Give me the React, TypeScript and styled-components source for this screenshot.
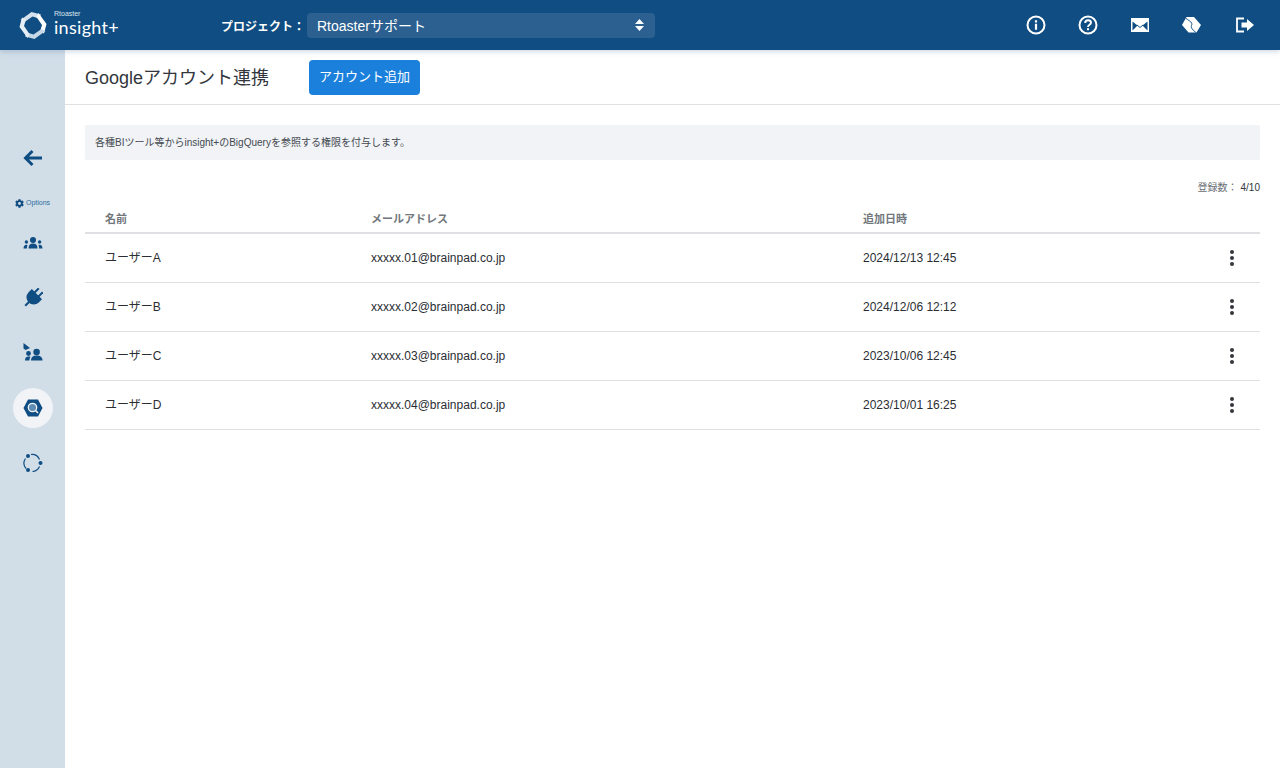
import styled, { createGlobalStyle } from 'styled-components'
import { FaCog } from 'react-icons/fa'

const Global = createGlobalStyle`
  html, body {
    margin: 0;
    padding: 0;
    height: 100%;
    background: #ffffff;
    font-family: "Liberation Sans", "Noto Sans CJK JP", sans-serif;
  }
  * {
    box-sizing: border-box;
  }
`

const Page = styled.div`
  width: 1280px;
  height: 768px;
  display: flex;
  flex-direction: column;
  overflow: hidden;
`

const Header = styled.header`
  height: 50px;
  flex: none;
  background: #0f4d82;
  box-shadow: 0 2px 5px rgba(40, 80, 130, 0.2);
  display: flex;
  align-items: center;
  padding-left: 19px;
  position: relative;
  z-index: 2;
`

const Logo = styled.div`
  width: 202px;
  display: flex;
  align-items: center;
  gap: 7px;
`

const LogoText = styled.div`
  display: flex;
  flex-direction: column;
  color: #ffffff;
  margin-top: -4px;
`

const LogoSmall = styled.span`
  font-size: 7px;
  line-height: 8px;
  color: #dbe6f0;
`

const LogoBig = styled.span`
  font-family: "Lato", sans-serif;
  font-size: 18px;
  line-height: 18px;
  letter-spacing: 0.3px;
`

const ProjectLabel = styled.span`
  width: 86px;
  color: #ffffff;
  font-size: 12px;
  font-weight: 700;
  white-space: nowrap;
`

const ProjectSelect = styled.div`
  width: 348px;
  height: 25px;
  padding: 0 11px 0 10px;
  border-radius: 4px;
  background: #2b6090;
  color: #ffffff;
  font-size: 14px;
  display: flex;
  align-items: center;
  justify-content: space-between;
`

const HeaderIcons = styled.div`
  margin-left: auto;
  display: flex;
  align-items: center;
  gap: 32px;
  padding-right: 26px;
`

const HeaderIcon = styled.svg`
  width: 20px;
  height: 20px;
  display: block;
  overflow: visible;
`

const Body = styled.div`
  flex: 1;
  display: flex;
  min-height: 0;
`

const Sidebar = styled.nav`
  width: 65px;
  flex: none;
  background: #d1dee8;
  padding-top: 88px;
  display: flex;
  flex-direction: column;
  align-items: center;
`

const NavItem = styled.div<{ $active?: boolean }>`
  width: 40px;
  height: 40px;
  margin-bottom: 15px;
  border-radius: 50%;
  background: ${({ $active }) => ($active ? '#f1f3f7' : 'transparent')};
  display: flex;
  align-items: center;
  justify-content: center;
`

const OptionsLabel = styled.div`
  height: 30px;
  padding-top: 5px;
  display: flex;
  align-items: flex-start;
  justify-content: center;
  gap: 2px;
  font-size: 7px;
  line-height: 10px;
  color: #2f6c9e;

  svg {
    color: #0f4d82;
    margin-top: 1px;
  }
`

const Main = styled.main`
  flex: 1;
  min-width: 0;
`

const TitleBar = styled.div`
  height: 55px;
  padding-left: 20px;
  border-bottom: 1px solid #dfdfe4;
  display: flex;
  align-items: center;
`

const Title = styled.h1`
  width: 224px;
  margin: -3px 0 0;
  font-size: 18px;
  font-weight: 400;
  color: #33373d;
  white-space: nowrap;
`

const AddButton = styled.button`
  width: 111px;
  height: 35px;
  border: none;
  border-radius: 4px;
  background: #1b80dc;
  color: #ffffff;
  font-family: inherit;
  font-size: 13px;
  padding: 0 0 3px;
`

const Content = styled.div`
  padding: 20px 20px 0;
`

const Notice = styled.div`
  height: 35px;
  padding: 0 0 2px 10px;
  border-radius: 2px;
  background: #f1f3f7;
  color: #444a50;
  font-size: 10px;
  display: flex;
  align-items: center;
`

const Count = styled.div`
  margin-top: 22px;
  height: 12px;
  text-align: right;
  font-size: 10px;
  line-height: 12px;
  color: #6b7075;

  b {
    font-weight: 400;
    color: #33373d;
    margin-left: 3px;
  }
`

const Row = styled.div`
  height: 49px;
  display: grid;
  grid-template-columns: 286px 492px 1fr 40px;
  align-items: center;
  border-bottom: 1px solid #dfdfe4;
  font-size: 12px;
  color: #2a2e33;
`

const HeadRow = styled(Row)`
  height: 28px;
  margin-top: 12px;
  padding-bottom: 3px;
  border-bottom: 2px solid #dfdfe4;
  font-size: 11px;
  font-weight: 700;
  color: #72777c;
`

const Cell = styled.div<{ $first?: boolean }>`
  padding-left: ${({ $first }) => ($first ? '20px' : '0')};
  white-space: nowrap;
`

const NameCell = styled(Cell)`
  margin-top: -4px;
`

const Dots = styled.div`
  justify-self: start;
  display: flex;
  flex-direction: column;
  gap: 2px;
  margin-left: 10px;

  span {
    width: 4px;
    height: 4px;
    border-radius: 50%;
    background: #33373d;
  }
`

const users = [
  { name: 'ユーザーA', mail: 'xxxxx.01@brainpad.co.jp', date: '2024/12/13 12:45' },
  { name: 'ユーザーB', mail: 'xxxxx.02@brainpad.co.jp', date: '2024/12/06 12:12' },
  { name: 'ユーザーC', mail: 'xxxxx.03@brainpad.co.jp', date: '2023/10/06 12:45' },
  { name: 'ユーザーD', mail: 'xxxxx.04@brainpad.co.jp', date: '2023/10/01 16:25' },
]

const navy = '#0f4d82'
const logoColors = ['#d5e2ee', '#ffffff', '#c6d7e6', '#e6eef5']

function LogoMark() {
  return (
    <svg width="28" height="29" viewBox="0 0 28 29">
      {logoColors.map((c, i) => (
        <path
          key={c}
          d="M1.500 9 12.500 1 22 3.500 20 7.500 13.500 5.500 5.500 11z"
          fill={c}
          transform={`rotate(${i * 90} 14 14.500)`}
        />
      ))}
    </svg>
  )
}

function People() {
  return (
    <svg width="20" height="12" viewBox="0 0 20 12" fill={navy}>
      <circle cx="10" cy="3" r="3" />
      <path d="M5.500 11.500c0-3.300 1.500-5 4.500-5s4.500 1.700 4.500 5z" />
      <circle cx="3.400" cy="5" r="1.700" />
      <path d="M.5 11.500c0-2.500 1-3.800 3-3.800.4 0 .7.100 1 .2-.4.900-.6 2-.6 3.600z" />
      <circle cx="16.600" cy="5" r="1.700" />
      <path d="M19.500 11.500c0-2.500-1-3.800-3-3.800-.4 0-.7.100-1 .2.400.9.600 2 .6 3.600z" />
    </svg>
  )
}

function Plug() {
  return (
    <svg width="20" height="20" viewBox="0 0 20 20" fill={navy}>
      <g transform="rotate(45 10 10)">
        <rect x="6.200" y="-1" width="2" height="6" />
        <rect x="11.800" y="-1" width="2" height="6" />
        <path d="M2.800 4.500h14.400v4.500a7.200 7.200 0 0 1-14.400 0z" />
        <rect x="9" y="15" width="2" height="6" />
      </g>
    </svg>
  )
}

function Audience() {
  return (
    <svg width="20" height="20" viewBox="0 1.500 20 20" fill={navy}>
      <path d="M0.500 1.500 7 6.500 2.600 8.500 0.500 7z" />
      <circle cx="13.600" cy="10.500" r="3.300" />
      <path d="M8 19c0-3.300 2-5 5.600-5s5.900 1.700 5.900 5z" />
      <circle cx="5.500" cy="12" r="2.400" />
      <path d="M2 19c0-2.700 1.200-4 3.500-4 .8 0 1.400.1 1.900.4C6.700 16.300 6.400 17.500 6.400 19z" />
    </svg>
  )
}

function BigQuery() {
  return (
    <svg width="20" height="18" viewBox="0 0 20 18">
      <path d="M5 .5h10L19.500 9 15 17.500H5L.5 9z" fill={navy} />
      <circle cx="9.500" cy="8.500" r="4.200" fill="#5f8db3" stroke="#f1f3f7" strokeWidth="1.300" />
      <path d="M12.500 11.500 15 14" stroke="#f1f3f7" strokeWidth="1.600" />
    </svg>
  )
}

function Flow() {
  return (
    <svg width="20" height="20" viewBox="0 0 20 20" fill="none">
      <path d="M8 1.500a8.300 8.300 0 0 1 8.500 5M16.500 13.500a8.300 8.300 0 0 1-7 5M3 15.500A8.300 8.300 0 0 1 2.500 5.500" stroke={navy} strokeWidth="1.200" />
      <circle cx="5" cy="3" r="2" fill={navy} />
      <circle cx="17.500" cy="10" r="2" fill={navy} />
      <circle cx="5" cy="17" r="2" fill={navy} />
    </svg>
  )
}

export default function App() {
  return (
    <Page>
      <Global />
      <Header>
        <Logo>
          <LogoMark />
          <LogoText>
            <LogoSmall>Rtoaster</LogoSmall>
            <LogoBig>insight+</LogoBig>
          </LogoText>
        </Logo>
        <ProjectLabel>プロジェクト：</ProjectLabel>
        <ProjectSelect>
          Rtoasterサポート
          <svg width="9" height="14" viewBox="0 0 9 14" fill="#ffffff">
            <path d="M4.500 1 9 6H0zM0 8h9l-4.500 5z" />
          </svg>
        </ProjectSelect>
        <HeaderIcons>
          <HeaderIcon viewBox="0 0 20 20" fill="none">
            <circle cx="10" cy="10" r="8.500" stroke="#fff" strokeWidth="2" />
            <path d="M10 5.200v2.200M10 8.800v6" stroke="#fff" strokeWidth="2.200" />
          </HeaderIcon>
          <HeaderIcon viewBox="0 0 20 20" fill="none">
            <circle cx="10" cy="10" r="8.500" stroke="#fff" strokeWidth="2" />
            <path d="M7.200 8c0-1.700 1.200-2.700 2.900-2.700S13 6.300 13 7.800c0 2-3 2.100-3 4.200" stroke="#fff" strokeWidth="1.900" />
            <path d="M10 13.200v2" stroke="#fff" strokeWidth="2.100" />
          </HeaderIcon>
          <HeaderIcon viewBox="0 0 20 20" fill="none">
            <rect x="1" y="3" width="18" height="14" fill="#fff" />
            <path d="M2.500 6.500 7.500 10.500 2.500 15.500zM17.500 6.500 12.500 10.500 17.500 15.500z" fill="#0f4d82" />
            <path d="M7 10 10 12.500 13 10" stroke="#0f4d82" strokeWidth="1" />
          </HeaderIcon>
          <HeaderIcon viewBox="0 0 20 20" fill="none">
            <path d="M4.500 2H12L19 10 14.500 17.500H6.500L0 10z" fill="#fff" />
            <path d="M4 3.500C8 6 11 8 9.500 10.500 8.500 13 11 15 14.500 18" stroke="#0f4d82" strokeWidth="1" />
          </HeaderIcon>
          <HeaderIcon viewBox="0 0 20 20" fill="none">
            <path d="M10 3.500H3v13h7" stroke="#fff" strokeWidth="1.800" />
            <path d="M7.500 7.500H13V4l7 6-7 6v-3.500H7.500z" fill="#fff" />
          </HeaderIcon>
        </HeaderIcons>
      </Header>
      <Body>
        <Sidebar>
          <NavItem>
            <svg width="20" height="18" viewBox="0 0 20 18" fill="none">
              <path d="M19 9H3M9.500 2 2.500 9l7 7" stroke={navy} strokeWidth="3" />
            </svg>
          </NavItem>
          <OptionsLabel>
            <FaCog size={9} />
            Options
          </OptionsLabel>
          <NavItem><People /></NavItem>
          <NavItem><Plug /></NavItem>
          <NavItem><Audience /></NavItem>
          <NavItem $active><BigQuery /></NavItem>
          <NavItem><Flow /></NavItem>
        </Sidebar>
        <Main>
          <TitleBar>
            <Title>Googleアカウント連携</Title>
            <AddButton>アカウント追加</AddButton>
          </TitleBar>
          <Content>
            <Notice>各種BIツール等からinsight+のBigQueryを参照する権限を付与します。</Notice>
            <Count>登録数：<b>4/10</b></Count>
            <HeadRow>
              <Cell $first>名前</Cell>
              <Cell>メールアドレス</Cell>
              <Cell>追加日時</Cell>
              <Cell />
            </HeadRow>
            {users.map((u) => (
              <Row key={u.mail}>
                <NameCell $first>{u.name}</NameCell>
                <Cell>{u.mail}</Cell>
                <Cell>{u.date}</Cell>
                <Dots><span /><span /><span /></Dots>
              </Row>
            ))}
          </Content>
        </Main>
      </Body>
    </Page>
  )
}
